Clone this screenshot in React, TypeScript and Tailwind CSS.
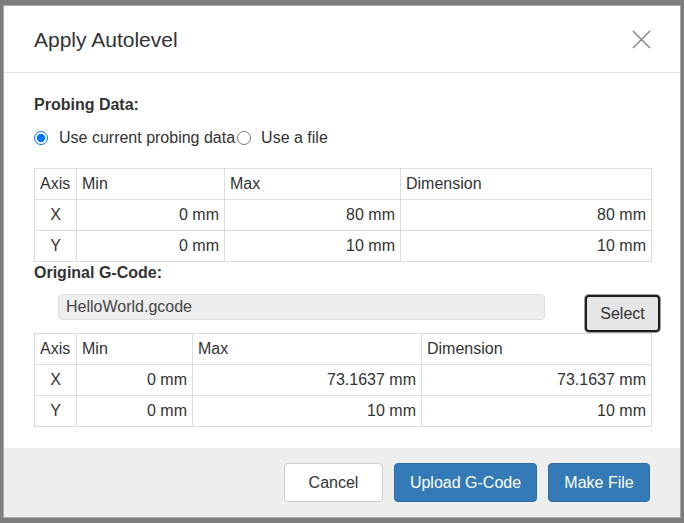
import { useState } from 'react';

interface AxisRow {
  axis: string;
  min: string;
  max: string;
  dim: string;
}

const probeRows: AxisRow[] = [
  { axis: 'X', min: '0 mm', max: '80 mm', dim: '80 mm' },
  { axis: 'Y', min: '0 mm', max: '10 mm', dim: '10 mm' },
];

const gcodeRows: AxisRow[] = [
  { axis: 'X', min: '0 mm', max: '73.1637 mm', dim: '73.1637 mm' },
  { axis: 'Y', min: '0 mm', max: '10 mm', dim: '10 mm' },
];

function BoundsTable({ rows, cols }: { rows: AxisRow[]; cols: [string, string, string, string] }) {
  return (
    <table className="w-[617px] border-collapse table-fixed">
      <colgroup>
        <col className={cols[0]} />
        <col className={cols[1]} />
        <col className={cols[2]} />
        <col className={cols[3]} />
      </colgroup>
      <thead>
        <tr className="h-[31px]">
          <th className="border border-[#dddddd] px-[5px] text-left font-normal">Axis</th>
          <th className="border border-[#dddddd] px-[5px] text-left font-normal">Min</th>
          <th className="border border-[#dddddd] px-[5px] text-left font-normal">Max</th>
          <th className="border border-[#dddddd] px-[5px] text-left font-normal">Dimension</th>
        </tr>
      </thead>
      <tbody>
        {rows.map(r => (
          <tr key={r.axis} className="h-[31px]">
            <td className="border border-[#dddddd] px-[5px] text-center">{r.axis}</td>
            <td className="border border-[#dddddd] px-[5px] text-right">{r.min}</td>
            <td className="border border-[#dddddd] px-[5px] text-right">{r.max}</td>
            <td className="border border-[#dddddd] px-[5px] text-right">{r.dim}</td>
          </tr>
        ))}
      </tbody>
    </table>
  );
}

export default function App() {
  const [source, setSource] = useState<'current' | 'file'>('current');

  return (
    <div
      className="w-[684px] h-[523px] overflow-hidden bg-[#7d7d7d] pt-[5px] pl-[3px] text-[#333333] text-[16px]"
      style={{ fontFamily: '"Liberation Sans", Arial, sans-serif' }}
    >
      <div className="w-[678px] h-[513px] bg-white border border-[#a8a8a8] flex flex-col">
        {/* Header */}
        <div className="h-[67px] flex items-center justify-between px-[30px] border-b border-[#e5e5e5] shrink-0">
          <h4 className="text-[21px] leading-none">Apply Autolevel</h4>
          <button className="w-[20px] h-[20px] flex items-center justify-center text-[#8a8a8a] mr-[-1px]">
            <svg width="19" height="19" viewBox="0 0 19 19" fill="none" stroke="currentColor" strokeWidth="1.6">
              <path d="M1 1 L18 18 M18 1 L1 18" />
            </svg>
          </button>
        </div>

        {/* Body */}
        <div className="flex-1 px-[30px]">
          <div className="h-[22px] mt-[21px] flex items-center font-bold">Probing Data:</div>
          <div className="h-[22px] mt-[11px] flex items-center">
            <input
              type="radio"
              name="src"
              checked={source === 'current'}
              onChange={() => setSource('current')}
              className="w-[14px] h-[14px] m-0 accent-[#0075ff]"
            />
            <span className="ml-[11px]">Use current probing data</span>
            <input
              type="radio"
              name="src"
              checked={source === 'file'}
              onChange={() => setSource('file')}
              className="w-[14px] h-[14px] m-0 ml-[2px] accent-[#0075ff]"
            />
            <span className="ml-[10px]">Use a file</span>
          </div>
          <div className="mt-[19px]">
            <BoundsTable rows={probeRows} cols={['w-[42px]', 'w-[148px]', 'w-[176px]', 'w-[251px]']} />
          </div>
          <div className="h-[22px] flex items-center font-bold">Original G-Code:</div>
          <div className="h-[49px] flex items-start">
            <div className="ml-[24px] mt-[10px] w-[487px] h-[26px] shrink-0 bg-[#eeeeee] border border-[#dedede] rounded-[4px] flex items-center px-[7px] text-[#444444]">
              HelloWorld.gcode
            </div>
            <button className="ml-[40px] mt-[11px] w-[75px] h-[37px] shrink-0 bg-[#e6e6e6] border-2 border-[#1e1e1e] rounded-[4px] ring-1 ring-[#a0a0a0] text-[#333333]">
              Select
            </button>
          </div>
          <BoundsTable rows={gcodeRows} cols={['w-[42px]', 'w-[116px]', 'w-[229px]', 'w-[230px]']} />
        </div>

        {/* Footer */}
        <div className="h-[69px] shrink-0 bg-[#eeeeee] flex items-center justify-end gap-[11px] px-[30px]">
          <button className="w-[99px] h-[39px] bg-white border border-[#cccccc] rounded-[4px] text-[#333333]">
            Cancel
          </button>
          <button className="w-[143px] h-[39px] bg-[#337ab7] border border-[#2e6da4] rounded-[4px] text-white">
            Upload G-Code
          </button>
          <button className="w-[102px] h-[39px] bg-[#337ab7] border border-[#2e6da4] rounded-[4px] text-white">
            Make File
          </button>
        </div>
      </div>

      {/* chart labels peeking below the backdrop */}
      <div className="flex ml-[73px] mt-[2px] text-[20px] leading-none text-[#8b3a3a]">
        {['10', '20', '30', '40', '50', '60', '70'].map(n => (
          <span key={n} className="w-[95px]">{n}</span>
        ))}
      </div>
    </div>
  );
}
